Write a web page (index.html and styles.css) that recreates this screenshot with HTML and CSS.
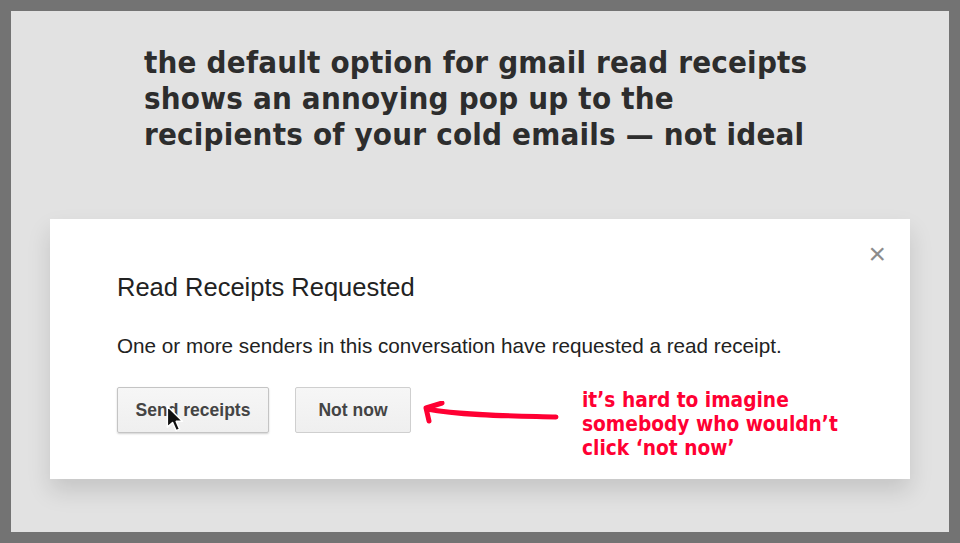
FILE: index.html
```html
<!DOCTYPE html>
<html lang="en">
<head>
  <meta charset="UTF-8">
  <title>Read Receipts</title>
  <link rel="stylesheet" href="styles.css">
</head>
<body>
  <div class="panel">
    <h1 class="headline">the default option for gmail read receipts<br>shows an annoying pop up to the<br>recipients of your cold emails &mdash; not ideal</h1>

    <div class="dialog">
      <span class="close">&times;</span>
      <div class="title">Read Receipts Requested</div>
      <p class="message">One or more senders in this conversation have requested a read receipt.</p>
      <div class="actions">
        <button class="btn btn-send">Send receipts
          <svg class="pointer" viewBox="0 0 16 24">
            <path d="M1 1 L1 19 L5.5 15 L8.5 22 L11.5 20.7 L8.6 14 L14 14 Z" fill="#111" stroke="#fff" stroke-width="1.3" stroke-linejoin="round"/>
          </svg>
        </button>
        <button class="btn btn-later">Not now</button>
        <svg class="arrow" viewBox="0 0 140 30">
          <path d="M134 16 C 100 15, 40 15, 5 8" fill="none" stroke="#ff0033" stroke-width="5" stroke-linecap="round"/>
          <path d="M20 2 L4 7 L7 20" fill="none" stroke="#ff0033" stroke-width="5" stroke-linecap="round" stroke-linejoin="round"/>
        </svg>
        <div class="note">it&rsquo;s hard to imagine<br>somebody who wouldn&rsquo;t<br>click &lsquo;not now&rsquo;</div>
      </div>
    </div>
  </div>
</body>
</html>
```

FILE: styles.css
```css
* {
  margin: 0;
  padding: 0;
  box-sizing: border-box;
}

body {
  background: #737373;
  padding: 11px;
  font-family: 'Liberation Sans', Arial, sans-serif;
}

.panel {
  background: #e2e2e2;
  width: 938px;
  height: 521px;
  padding-top: 33px;
}

.headline {
  font-family: 'DejaVu Sans Condensed', 'DejaVu Sans', sans-serif;
  font-stretch: condensed;
  font-weight: 700;
  font-size: 31px;
  line-height: 36px;
  letter-spacing: 0.2px;
  color: #2d2d2d;
  margin-left: 133px;
}

.dialog {
  position: relative;
  background: #fff;
  width: 860px;
  height: 260px;
  margin: 67px 0 0 39px;
  padding: 53px 0 0 67px;
  box-shadow: 0 12px 22px rgba(0, 0, 0, 0.13);
}

.close {
  position: absolute;
  right: 24px;
  top: 19px;
  font-size: 30px;
  line-height: 32px;
  color: #8c8c8c;
}

.title {
  font-size: 25.5px;
  line-height: 30px;
  color: #222;
}

.message {
  margin-top: 32px;
  font-size: 20.7px;
  line-height: 24px;
  color: #222;
}

.actions {
  display: flex;
  align-items: flex-start;
  margin-top: 29px;
}

.btn {
  position: relative;
  height: 46px;
  border: 1px solid #cfcfcf;
  border-radius: 2px;
  background: linear-gradient(#f6f6f6, #efefef);
  font-family: 'Liberation Sans', Arial, sans-serif;
  font-weight: 700;
  font-size: 17.5px;
  color: #444;
}

.btn-send {
  width: 152px;
  box-shadow: 0 1px 2px rgba(0, 0, 0, 0.18);
  border-color: #c4c4c4;
}

.btn-later {
  width: 116px;
  margin-left: 26px;
}

.pointer {
  position: absolute;
  left: 48px;
  top: 17px;
  width: 19px;
  height: 28px;
}

.arrow {
  width: 140px;
  height: 30px;
  margin: 14px 0 0 11px;
}

.note {
  margin: 1px 0 0 20px;
  font-family: 'DejaVu Sans Condensed', 'DejaVu Sans', sans-serif;
  font-stretch: condensed;
  font-weight: 700;
  font-size: 20.7px;
  line-height: 24px;
  color: #ff0033;
}
```
